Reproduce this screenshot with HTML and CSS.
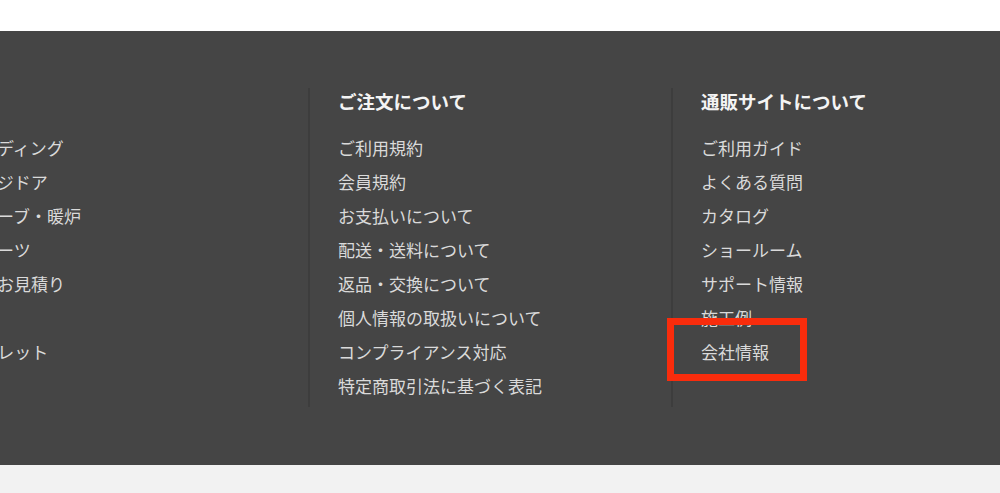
FILE: index.html
```html
<!DOCTYPE html>
<html lang="ja">

<head>
    <meta charset="UTF-8">
    <meta name="viewport" content="width=device-width, initial-scale=1.0">
    <title>フッターメニュー</title>
    <link rel="stylesheet" href="styles.css">
</head>

<body>
    <div class="top-space"></div>
    <footer class="site-footer">
        <div class="site-footer__inner">
            <nav class="footer-col footer-col--first">
                <h3 class="footer-col__title">商品</h3>
                <ul class="footer-col__list">
                    <li>杉サイディング</li>
                    <li>ガレージドア</li>
                    <li>薪ストーブ・暖炉</li>
                    <li>交換パーツ</li>
                    <li>ネットお見積り</li>
                    <li>施工集</li>
                    <li>パンフレット</li>
                </ul>
            </nav>
            <nav class="footer-col footer-col--divided">
                <h3 class="footer-col__title">ご注文について</h3>
                <ul class="footer-col__list">
                    <li>ご利用規約</li>
                    <li>会員規約</li>
                    <li>お支払いについて</li>
                    <li>配送・送料について</li>
                    <li>返品・交換について</li>
                    <li>個人情報の取扱いについて</li>
                    <li>コンプライアンス対応</li>
                    <li>特定商取引法に基づく表記</li>
                </ul>
            </nav>
            <nav class="footer-col footer-col--divided">
                <h3 class="footer-col__title">通販サイトについて</h3>
                <ul class="footer-col__list">
                    <li>ご利用ガイド</li>
                    <li>よくある質問</li>
                    <li>カタログ</li>
                    <li>ショールーム</li>
                    <li>サポート情報</li>
                    <li>施工例</li>
                    <li class="is-marked">会社情報<span class="mark-box"></span></li>
                </ul>
            </nav>
        </div>
    </footer>
    <div class="bottom-space"></div>
</body>

</html>
```

FILE: styles.css
```css
body {
    margin: 0;
    background-color: #fff;
    font-family: "Noto Sans CJK JP", "Noto Sans", sans-serif;
    overflow: hidden;
}

.top-space {
    height: 31px;
    background-color: #fff;
}

.site-footer {
    background-color: #454545;
    padding: 57px 0 58px;
}

.site-footer__inner {
    display: grid;
    grid-template-columns: 388px 363px 1fr;
    margin-left: -80px;
}

.footer-col {
    padding: 0 0 4px 26px;
}

.footer-col--divided {
    border-left: 2px solid #3d3d3d;
    padding-left: 28px;
}

.footer-col__title {
    margin: 0 0 17px;
    color: #f4f4f4;
    font-size: 18.5px;
    font-weight: 700;
    line-height: 26px;
}

.footer-col__list {
    list-style: none;
    margin: 0;
    padding: 0;
}

.footer-col__list li {
    color: #dadada;
    font-size: 17px;
    line-height: 34px;
    white-space: nowrap;
}

.is-marked {
    position: relative;
}

.mark-box {
    position: absolute;
    left: -34px;
    top: -17px;
    width: 126px;
    height: 49px;
    border: 7px solid #f92c0c;
}

.bottom-space {
    height: 28px;
    background-color: #f2f2f2;
}
```
